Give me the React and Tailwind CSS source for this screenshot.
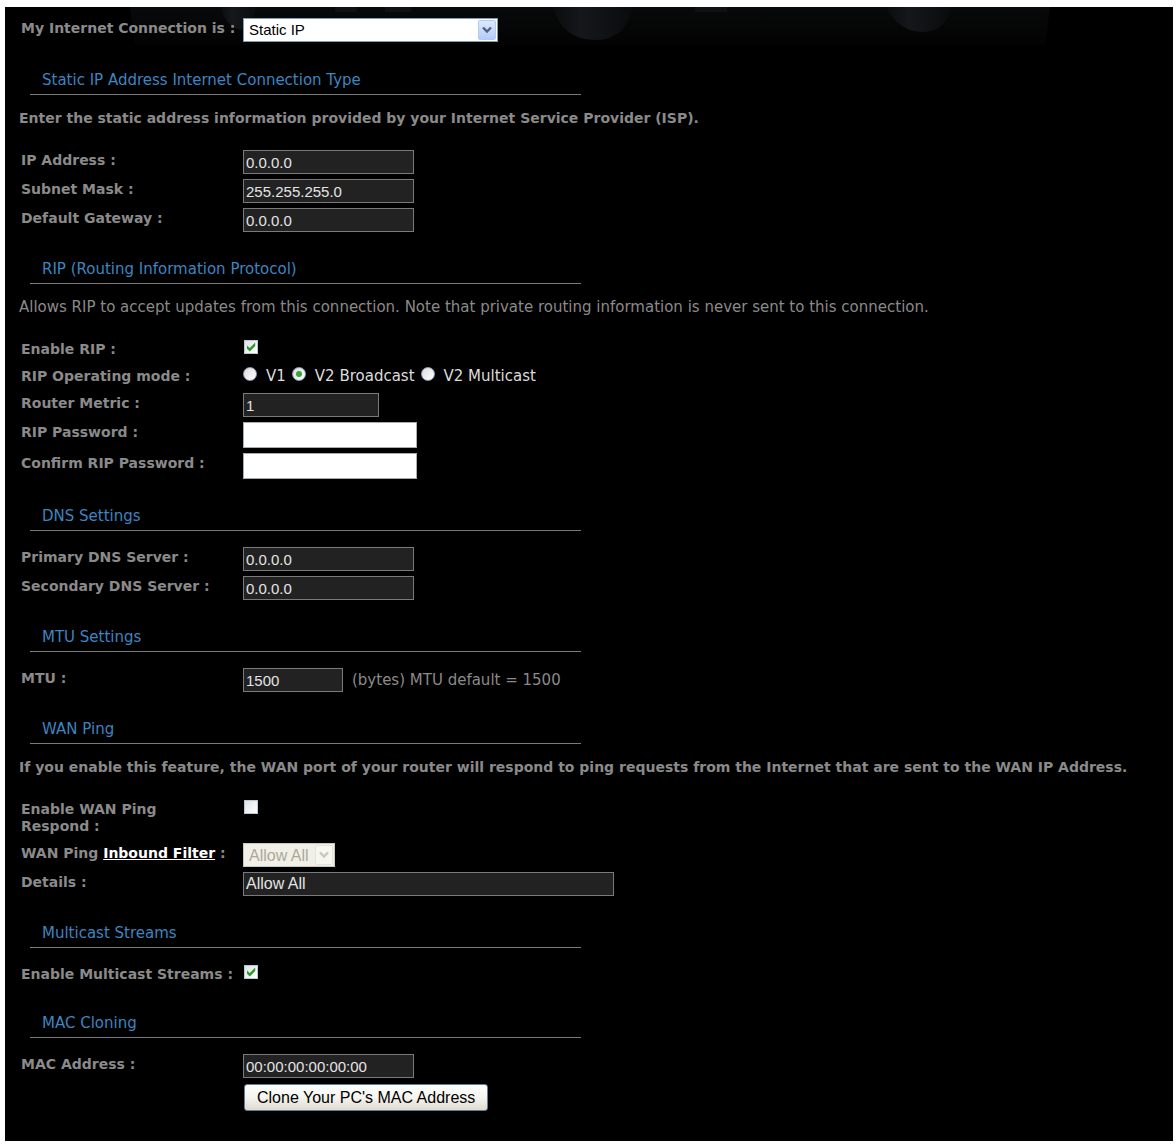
import { useState } from 'react';
import clsx from 'clsx';

const Section = ({ title, children }) => (
  <section className="mt-[27px]">
    <h2 className="ml-[11px] max-w-[551px] border-b border-[#7a7a7a] pb-1 pl-3 text-[15px] leading-5 text-[#3d85c0]">
      {title}
    </h2>
    {children}
  </section>
);

const Note = ({ bold, children }) => (
  <p className={clsx('mt-[13px] leading-5', bold ? 'text-[14px] font-bold' : 'text-[15px]')}>
    {children}
  </p>
);

const Fields = ({ afterNote, children }) => (
  <div className={clsx('flex flex-col gap-[5px]', afterNote ? 'mt-[22px]' : 'mt-4')}>
    {children}
  </div>
);

const Row = ({ label, htmlFor, children }) => (
  <div className="flex items-start">
    <label
      htmlFor={htmlFor}
      className="w-[224px] shrink-0 pl-[2px] text-[14px] font-bold leading-5 whitespace-nowrap"
    >
      {label}
    </label>
    {children}
  </div>
);

const TextBox = ({ id, value, className = 'w-[171px] text-[15px]' }) => {
  const [text, setText] = useState(value);
  return (
    <input
      id={id}
      type="text"
      value={text}
      onChange={(e) => setText(e.target.value)}
      className={clsx(
        "h-6 border border-[#7a7a7a] bg-[#222222] px-[2px] font-['Liberation_Sans',Arial,sans-serif] text-[#e4e4e4] outline-none",
        className
      )}
    />
  );
};

const PasswordBox = ({ id }) => (
  <input
    id={id}
    type="password"
    className="h-[26px] w-[174px] border border-[#a5acb2] bg-white px-[2px] text-[15px] text-black outline-none"
  />
);

const CheckBox = ({ id, defaultChecked }) => (
  <span className="relative mt-px mb-[7px] ml-px block size-[14px]">
    <input
      id={id}
      type="checkbox"
      defaultChecked={defaultChecked}
      className="peer block size-[14px] appearance-none border border-[#b9c6d6] bg-linear-to-br from-[#dfe3e6] to-white"
    />
    <svg
      viewBox="0 0 14 14"
      className="pointer-events-none absolute inset-0 hidden size-[14px] peer-checked:block"
    >
      <path d="M3 5.4v3.4l2.8 2.8L11.2 6V2.6L5.8 8z" fill="#2f9a2c" />
    </svg>
  </span>
);

const Radio = ({ name, label, defaultChecked }) => (
  <label className="flex items-center leading-5">
    <span className="relative mb-1 block size-[14px]">
      <input
        type="radio"
        name={name}
        defaultChecked={defaultChecked}
        className="peer block size-[14px] appearance-none rounded-full border border-[#8ba0b8] bg-linear-to-br from-[#dcdcdc] to-white"
      />
      <span className="pointer-events-none absolute inset-1 hidden rounded-full bg-[#3aa336] peer-checked:block" />
    </span>
    <span className="ml-[9px]">{label}</span>
  </label>
);

const SelectBox = ({ id, options, disabled, className }) => (
  <span className={clsx('relative block h-6', className)}>
    <select
      id={id}
      disabled={disabled}
      className={clsx(
        "block h-6 w-full appearance-none border px-[5px] font-['Liberation_Sans',Arial,sans-serif] outline-none",
        disabled
          ? 'border-[#c9c7ba] bg-[#f1f0e8] text-[16px] text-[#aca899] opacity-100'
          : 'border-[#7f9db9] bg-white text-[15px] text-black'
      )}
    >
      {options.map((option) => (
        <option key={option}>{option}</option>
      ))}
    </select>
    <span
      className={clsx(
        'pointer-events-none absolute inset-y-[2px] right-[2px] flex w-[18px] items-center justify-center rounded-[2px] border',
        disabled
          ? 'border-[#e4e3da] bg-[#f7f6f0] text-[#c9c7ba]'
          : 'border-[#b4c8f2] bg-linear-to-b from-[#dde8fd] to-[#b5cbf9] text-[#4d6185]'
      )}
    >
      <svg viewBox="0 0 10 8" className="h-2 w-[10px]">
        <path d="M1 1.5l4 4 4-4" fill="none" stroke="currentColor" strokeWidth="2.4" />
      </svg>
    </span>
  </span>
);

// Dim strip of the router photo that shows through at the top of the panel
const Backdrop = () => (
  <svg
    viewBox="0 0 1168 40"
    preserveAspectRatio="none"
    className="pointer-events-none absolute inset-x-0 top-0 h-10 w-full"
    aria-hidden="true"
  >
    <defs>
      <linearGradient id="strip" x1="0" x2="0" y1="0" y2="1">
        <stop offset="0" stopColor="#08090a" />
        <stop offset="1" stopColor="#030303" />
      </linearGradient>
      <linearGradient id="knob">
        <stop offset="0" stopColor="#0a0c0e" />
        <stop offset="0.35" stopColor="#15171a" />
        <stop offset="1" stopColor="#090b0d" />
      </linearGradient>
    </defs>
    <path d="M125 0H1045L1040 38H130z" fill="url(#strip)" />
    <path d="M215 0h36q-4 20-16 23-14-4-20-23z" fill="url(#knob)" />
    <path d="M548 0h80q-8 33-37 33-34 0-43-33z" fill="url(#knob)" />
    <path d="M881 0h65q-6 25-28 25-24 0-37-25z" fill="url(#knob)" />
    <path d="M330 0h22v5h-22zM380 0h26v5h-26zM690 0h32v5h-32z" fill="#101112" />
  </svg>
);

const App = () => {
  return (
    <div className="bg-white pt-[7px] pr-[3px] pb-1 pl-[5px]">
      <main className="relative bg-black pt-[11px] pr-3 pb-[30px] pl-[14px] font-['DejaVu_Sans',Verdana,sans-serif] text-[15px] text-[#8a8a8a]">
        <Backdrop />

        <div className="relative pb-px">
          <Row label="My Internet Connection is :" htmlFor="connection">
            <SelectBox
              id="connection"
              className="w-[255px]"
              options={['Static IP', 'Dynamic IP (DHCP)', 'PPPoE', 'PPTP', 'L2TP']}
            />
          </Row>
        </div>

        <Section title="Static IP Address Internet Connection Type">
          <Note bold>
            Enter the static address information provided by your Internet Service Provider (ISP).
          </Note>
          <Fields afterNote>
            <Row label="IP Address :" htmlFor="ip">
              <TextBox id="ip" value="0.0.0.0" />
            </Row>
            <Row label="Subnet Mask :" htmlFor="subnet">
              <TextBox id="subnet" value="255.255.255.0" />
            </Row>
            <Row label="Default Gateway :" htmlFor="gateway">
              <TextBox id="gateway" value="0.0.0.0" />
            </Row>
          </Fields>
        </Section>

        <Section title="RIP (Routing Information Protocol)">
          <Note>
            Allows RIP to accept updates from this connection. Note that private routing information
            is never sent to this connection.
          </Note>
          <Fields afterNote>
            <Row label="Enable RIP :" htmlFor="rip">
              <CheckBox id="rip" defaultChecked />
            </Row>
            <Row label="RIP Operating mode :">
              <div className="flex gap-[6px] pb-[2px] text-[#dcdcdc]">
                <Radio name="mode" label="V1" />
                <Radio name="mode" label="V2 Broadcast" defaultChecked />
                <Radio name="mode" label="V2 Multicast" />
              </div>
            </Row>
            <Row label="Router Metric :" htmlFor="metric">
              <TextBox id="metric" value="1" className="w-[136px] text-[15px]" />
            </Row>
            <Row label="RIP Password :" htmlFor="password">
              <PasswordBox id="password" />
            </Row>
            <Row label="Confirm RIP Password :" htmlFor="confirm">
              <PasswordBox id="confirm" />
            </Row>
          </Fields>
        </Section>

        <Section title="DNS Settings">
          <Fields>
            <Row label="Primary DNS Server :" htmlFor="dns1">
              <TextBox id="dns1" value="0.0.0.0" />
            </Row>
            <Row label="Secondary DNS Server :" htmlFor="dns2">
              <TextBox id="dns2" value="0.0.0.0" />
            </Row>
          </Fields>
        </Section>

        <Section title="MTU Settings">
          <Fields>
            <Row label="MTU :" htmlFor="mtu">
              <TextBox id="mtu" value="1500" className="w-[100px] text-[15px]" />
              <span className="ml-[9px] leading-6">(bytes) MTU default = 1500</span>
            </Row>
          </Fields>
        </Section>

        <Section title="WAN Ping">
          <Note bold>
            If you enable this feature, the WAN port of your router will respond to ping requests
            from the Internet that are sent to the WAN IP Address.
          </Note>
          <Fields afterNote>
            <Row
              label={
                <span className="block pt-[2px] pb-[3px] leading-[17px]">
                  Enable WAN Ping
                  <br />
                  Respond :
                </span>
              }
              htmlFor="ping"
            >
              <CheckBox id="ping" />
            </Row>
            <Row
              label={
                <>
                  WAN Ping{' '}
                  <a href="#filter" className="text-white underline">
                    Inbound Filter
                  </a>{' '}
                  :
                </>
              }
              htmlFor="filter"
            >
              <SelectBox id="filter" className="w-[92px]" options={['Allow All']} disabled />
            </Row>
            <Row label="Details :" htmlFor="details">
              <TextBox id="details" value="Allow All" className="w-[371px] text-[16px]" />
            </Row>
          </Fields>
        </Section>

        <Section title="Multicast Streams">
          <Fields>
            <Row label="Enable Multicast Streams :" htmlFor="multicast">
              <CheckBox id="multicast" defaultChecked />
            </Row>
          </Fields>
        </Section>

        <Section title="MAC Cloning">
          <Fields>
            <Row label="MAC Address :" htmlFor="mac">
              <div className="flex flex-col items-start gap-[6px]">
                <TextBox id="mac" value="00:00:00:00:00:00" />
                <button
                  type="button"
                  className="ml-px h-[27px] rounded-[3px] border border-[#5f7f9a] bg-linear-to-b from-white via-[#f5f4ef] to-[#dedbcf] px-3 font-['Liberation_Sans',Arial,sans-serif] text-[16px] text-black"
                >
                  Clone Your PC's MAC Address
                </button>
              </div>
            </Row>
          </Fields>
        </Section>
      </main>
    </div>
  );
};

export default App;
